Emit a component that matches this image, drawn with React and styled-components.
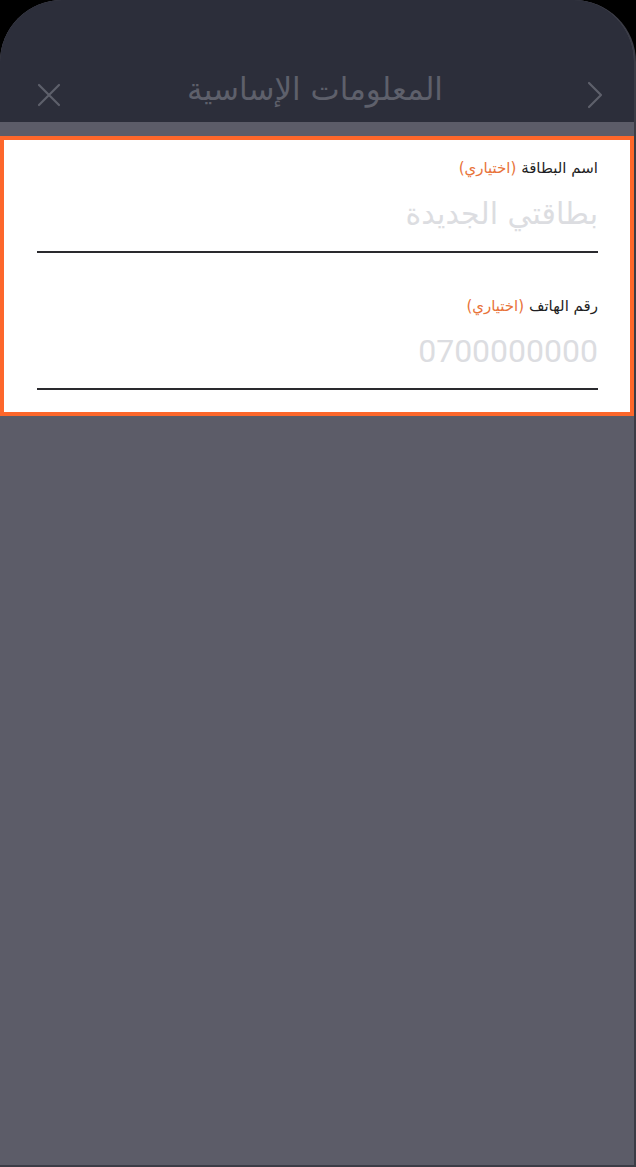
import React from 'react';
import styled, { createGlobalStyle } from 'styled-components';

const GlobalStyle = createGlobalStyle`
  html, body {
    margin: 0;
    padding: 0;
    background: #000000;
  }
  * { box-sizing: border-box; }
`;

export default function App() {
  return (
    <>
      <GlobalStyle />
      <Screen>
        <Header>
          <IconButton aria-label="close">
            <svg width="26" height="26" viewBox="0 0 26 26">
              <path d="M3 3 L23 23 M23 3 L3 23" stroke="#5e606b" strokeWidth="2.2" strokeLinecap="round" fill="none" />
            </svg>
          </IconButton>
          <Title>المعلومات الإساسية</Title>
          <IconButton aria-label="next">
            <svg width="18" height="30" viewBox="0 0 18 30">
              <path d="M3 3 L15 15 L3 27" stroke="#5e606b" strokeWidth="2.2" strokeLinecap="round" strokeLinejoin="round" fill="none" />
            </svg>
          </IconButton>
        </Header>
        <Strip />
        <Form>
          <Field>
            <Label>
              اسم البطاقة <Optional>(اختياري)</Optional>
            </Label>
            <Placeholder>بطاقتي الجديدة</Placeholder>
          </Field>
          <Field>
            <Label>
              رقم الهاتف <Optional>(اختياري)</Optional>
            </Label>
            <Placeholder $numeric>0700000000</Placeholder>
          </Field>
        </Form>
        <Rest />
      </Screen>
    </>
  );
}

const Screen = styled.div`
  width: 636px;
  height: 1167px;
  display: flex;
  flex-direction: column;
  background-color: #5c5c68;
  border-radius: 62px 62px 0 0;
  border-right: 2px solid #3b3c46;
  border-bottom: 2px solid #3b3c46;
  overflow: hidden;
`;

const Header = styled.div`
  height: 122px;
  flex-shrink: 0;
  background-color: #2c2e3a;
  display: flex;
  align-items: center;
  justify-content: space-between;
  padding: 68px 24px 0 34px;
`;

const IconButton = styled.div`
  width: 30px;
  height: 32px;
  display: flex;
  align-items: center;
  justify-content: center;
`;

const Title = styled.div`
  direction: rtl;
  font-family: "DejaVu Sans", sans-serif;
  font-size: 31px;
  color: #5e606b;
  margin-top: -12px;
  margin-right: 14px;
`;

const Strip = styled.div`
  height: 14px;
  flex-shrink: 0;
  background-color: #5c5c68;
`;

const Form = styled.div`
  flex-shrink: 0;
  background-color: #ffffff;
  border: 4px solid #fd672b;
  padding: 17px 32px 22px 33px;
  display: flex;
  flex-direction: column;
  gap: 42px;
`;

const Field = styled.div`
  direction: rtl;
  display: flex;
  flex-direction: column;
  border-bottom: 2px solid #2a2a2e;
  padding-bottom: 17px;
`;

const Label = styled.div`
  font-family: "DejaVu Sans", sans-serif;
  font-size: 15px;
  color: #1f1f24;
  line-height: 22px;
`;

const Optional = styled.span`
  color: #e8733a;
`;

const Placeholder = styled.div`
  font-family: ${p => (p.$numeric ? 'Roboto, "Liberation Sans", sans-serif' : '"DejaVu Sans", sans-serif')};
  font-size: ${p => (p.$numeric ? '32px' : '30px')};
  color: #dcdde1;
  line-height: 40px;
  margin-top: ${p => (p.$numeric ? '14px' : '15px')};
`;

const Rest = styled.div`
  flex: 1;
  background-color: #5c5c68;
`;
